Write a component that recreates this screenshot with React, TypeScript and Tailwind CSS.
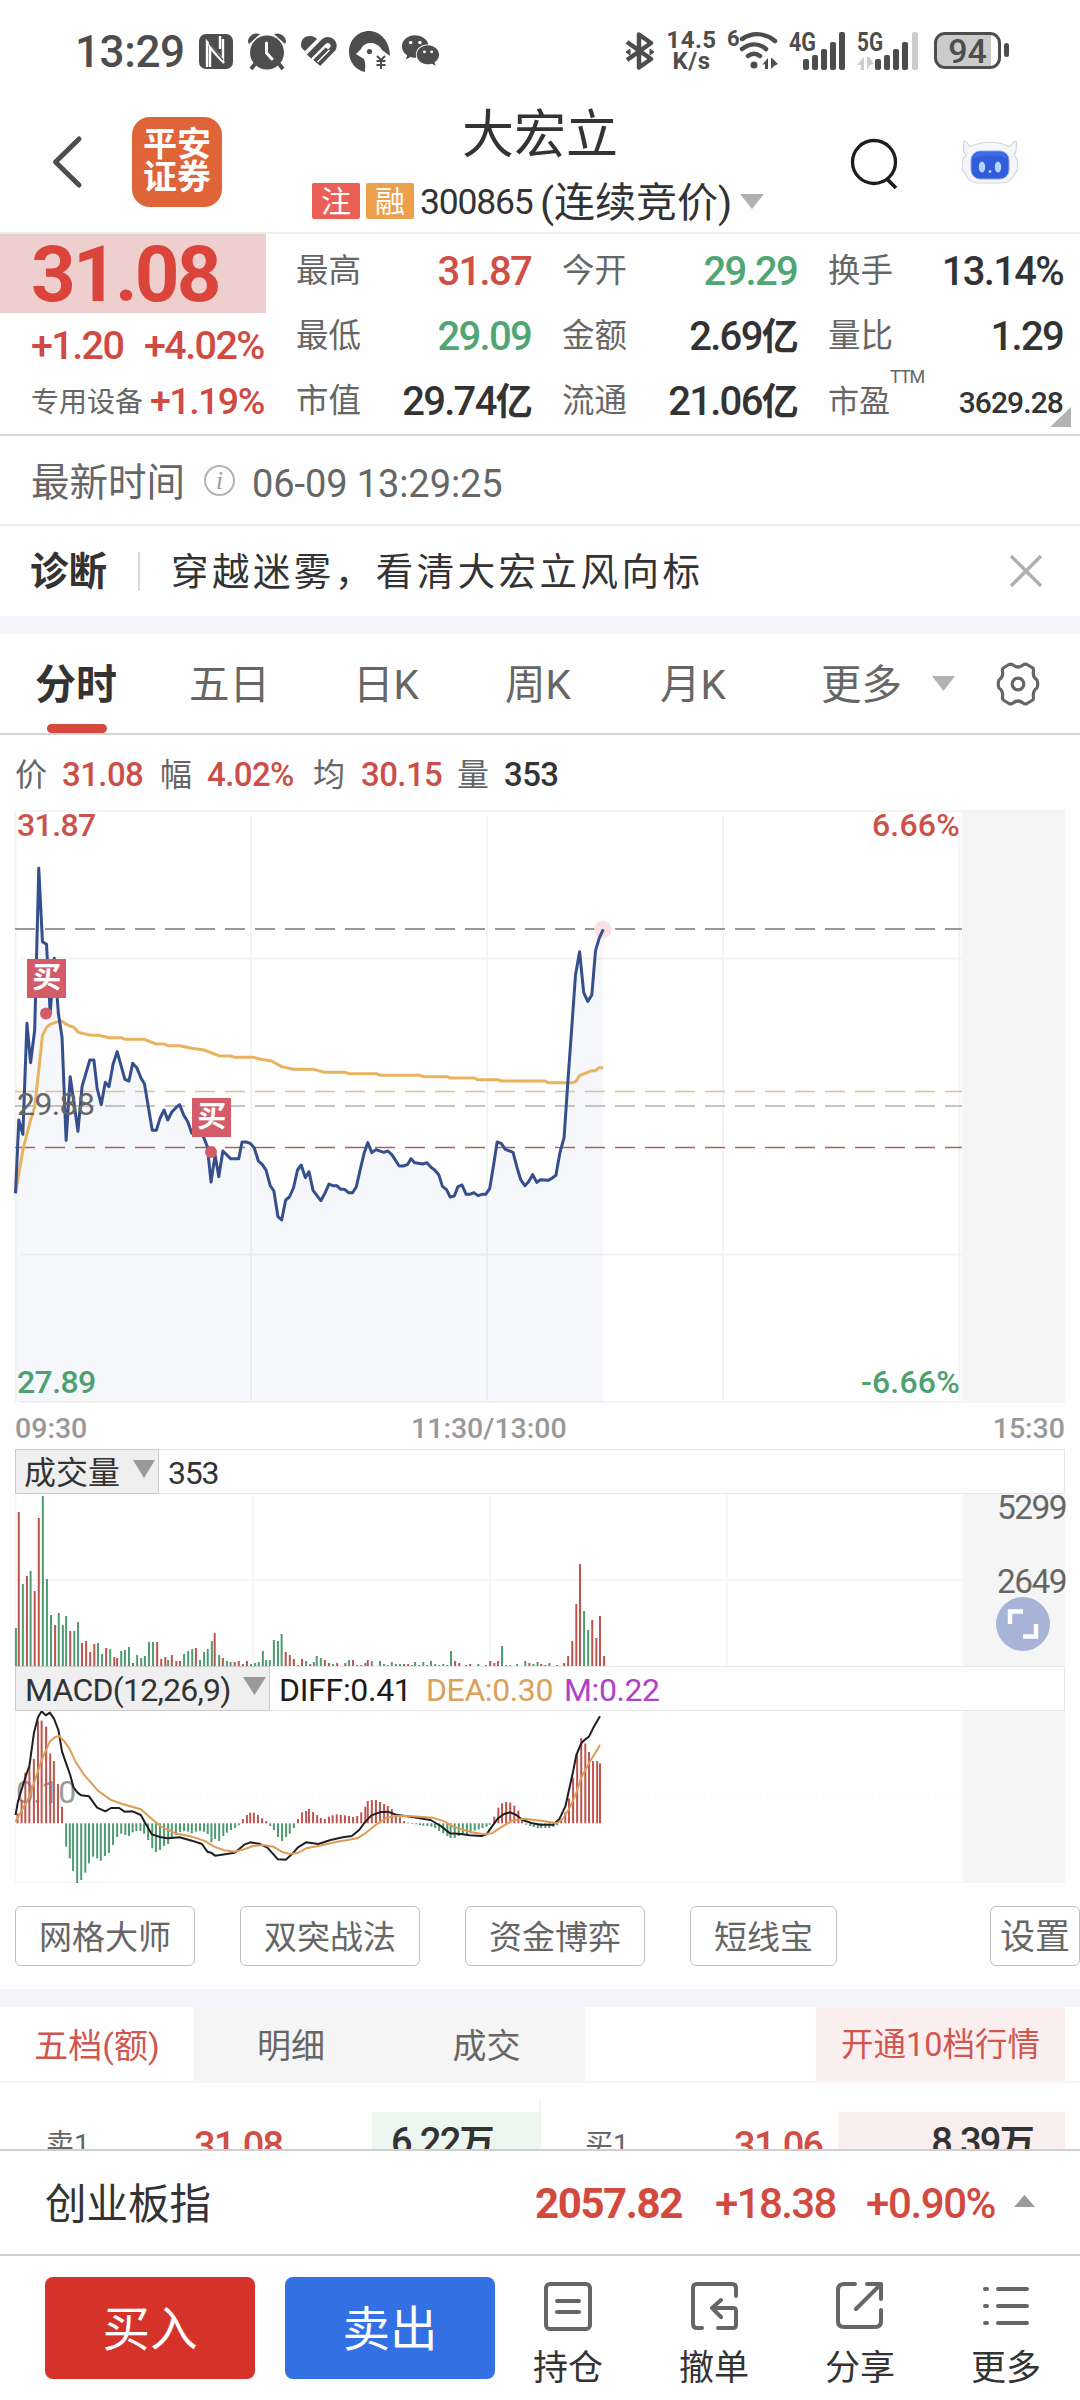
import React from "react";
import { FaWeixin } from "react-icons/fa";

const PRICE =
  "38,1180 46,960 56,1003 66,670 75,788 85,690 95,205 104,425 114,433 123,640 133,475 143,640 152,712 162,1021 172,830 181,905 191,994 201,860 220,780 230,780 238,865 248,914 258,847 267,860 277,793 287,755 306,838 316,843 325,790 335,803 345,833 354,852 373,991 383,991 392,955 402,930 411,960 421,936 431,923 440,914 450,945 460,965 470,1000 480,985 490,990 500,1015 508,1040 517,1146 527,1065 536,1130 546,1053 565,1076 585,1076 593,1026 603,1026 613,1030 623,1044 633,1083 643,1094 652,1111 662,1157 671,1173 681,1250 690,1260 700,1200 709,1191 719,1164 729,1110 738,1095 748,1133 757,1115 767,1171 786,1202 796,1180 806,1152 815,1157 825,1157 835,1168 844,1168 854,1178 864,1178 873,1160 882,1112 892,1060 901,1028 911,1058 921,1049 940,1057 950,1053 960,1064 978,1098 988,1098 998,1094 1007,1076 1016,1088 1036,1092 1046,1088 1056,1102 1065,1110 1075,1124 1084,1159 1094,1169 1103,1191 1113,1188 1122,1160 1132,1155 1142,1183 1151,1183 1161,1178 1171,1187 1181,1183 1190,1183 1200,1165 1210,1090 1218,1026 1228,1030 1238,1048 1257,1057 1267,1104 1276,1140 1286,1157 1295,1145 1305,1124 1315,1147 1324,1139 1344,1141 1353,1134 1362,1126 1372,1057 1382,1013 1391,850 1401,680 1410,525 1420,455 1430,577 1440,604 1450,585 1459,452 1468,415 1478,388";

const AVERAGE =
  "38,1180 56,1050 75,960 85,922 95,810 104,707 114,682 123,673 143,664 152,664 162,673 181,682 191,696 201,700 220,705 240,706 268,713 297,713 307,718 354,718 382,732 402,732 412,737 440,737 470,745 500,750 536,767 565,768 575,772 622,772 635,777 665,783 690,800 718,808 768,808 796,817 845,817 855,821 922,821 932,826 1030,826 1038,830 1095,830 1103,834 1162,834 1170,839 1220,839 1228,843 1335,843 1343,848 1403,848 1411,844 1420,827 1450,812 1459,812 1468,803 1478,803";

// "x:top" pairs; a trailing g marks a falling minute, r a rising one.
const VOLUME =
  "39:774g 46:426r 56:642g 66:618r 75:603g 85:663r 95:444r 105:378g 115:627g 125:735g 135:765r 144:729g 154:765g 162:738g 172:783r 182:783g 191:756g 201:819r 211:813r 221:846r 231:822r 240:819g 250:852g 260:834r 270:837g 280:861r 287:864r 297:843g 306:840g 316:831g 326:879r 336:855g 346:864g 355:858g 365:816g 375:816g 385:816r 395:867r 405:861r 412:870g 421:855r 432:873r 441:873r 451:852g 461:843g 471:837g 480:834r 490:870g 500:846g 509:837g 519:813g 526:789r 537:855g 546:864r 556:873g 565:876g 575:876r 585:873r 595:882r 605:873r 615:882g 625:879g 634:876g 644:843g 652:870g 661:870g 671:810g 681:813g 690:792g 700:846r 710:855r 720:867r 730:885r 740:867r 750:873g 760:882r 769:876g 776:858g 786:864g 796:870r 806:879r 816:882g 826:879r 846:879r 855:870g 865:870r 875:885r 885:885r 895:879r 901:870r 911:873g 931:873g 941:882g 950:885r 960:876g 970:882g 980:882g 990:882r 1000:882r 1010:885r 1017:876g 1027:885g 1037:876g 1047:885r 1056:873g 1066:882g 1076:885g 1086:882g 1096:885g 1105:843g 1115:873r 1125:879r 1142:885g 1152:882r 1172:882g 1191:885r 1201:873r 1211:879r 1220:873r 1230:828g 1240:885g 1250:885g 1267:882g 1287:873g 1297:879r 1307:882g 1317:876g 1326:882r 1336:885r 1346:879g 1365:885r 1382:879r 1392:858r 1402:813r 1412:702r 1421:582r 1431:723g 1441:780g 1451:750r 1461:804r 1470:738r 1480:858r";

const MACD =
  "43:400 53:360 62:278 72:258 83:237 93:122 102:122 113:140 123:220 132:243 142:312 152:380 162:500 171:535 179:573 189:612 199:600 209:578 218:550 228:530 238:535 247:542 257:528 267:519 277:495 287:471 297:461 307:465 316:468 325:457 334:453 344:453 353:461 363:480 373:505 382:516 392:510 402:498 412:492 421:477 431:465 441:456 451:453 461:455 470:460 480:455 490:453 500:455 509:462 518:487 527:477 537:483 547:468 556:458 566:450 576:444 585:436 595:417 605:405 613:398 622:398 632:405 642:415 652:423 662:438 671:450 681:471 691:483 701:471 710:461 720:444 730:417 740:397 750:393 757:387 767:396 777:405 786:414 796:417 806:410 815:406 825:403 835:405 845:406 855:408 865:411 875:408 885:397 895:380 901:363 911:360 921:360 931:366 941:372 950:378 960:387 970:405 980:412 990:423 1000:428 1010:432 1020:433 1029:435 1037:437 1047:438 1057:440 1066:444 1076:453 1086:460 1096:468 1104:474 1114:474 1124:468 1134:465 1144:463 1153:460 1163:452 1173:448 1182:444 1192:440 1200:434 1211:410 1221:383 1230:370 1240:366 1250:368 1260:377 1270:392 1279:417 1289:434 1299:438 1308:441 1318:444 1326:444 1336:444 1346:444 1356:441 1365:436 1375:420 1385:397 1394:355 1404:293 1414:225 1424:174 1434:190 1443:216 1453:243 1463:243 1470:250";

const DIFF =
  "38,405 44,365 54,325 64,285 72,258 83,160 93,112 102,94 112,106 122,98 132,115 143,150 152,215 162,250 172,285 180,322 190,338 199,346 218,349 238,383 258,394 272,384 292,384 305,395 325,394 345,405 356,430 372,463 392,471 410,475 440,472 470,482 495,492 508,515 517,518 527,527 575,518 600,493 613,487 635,491 655,503 670,523 681,538 700,539 715,523 730,502 750,487 780,492 810,480 840,472 862,468 880,450 895,425 910,406 930,397 950,395 970,404 1010,411 1055,420 1080,438 1102,460 1130,462 1150,466 1180,468 1192,463 1205,440 1220,415 1235,402 1250,397 1265,405 1280,420 1305,430 1325,434 1355,434 1370,418 1385,380 1395,325 1404,275 1412,225 1424,190 1434,178 1443,170 1455,140 1470,109";

const DEA =
  "38,425 54,390 72,350 90,285 102,240 122,185 135,171 145,168 158,185 170,205 185,245 205,283 240,332 270,359 300,372 345,388 370,415 395,440 430,460 470,470 500,482 525,500 550,511 575,515 600,507 620,498 645,495 670,500 690,515 710,522 730,519 750,505 780,498 820,487 875,475 895,460 920,435 945,415 970,408 1000,408 1060,413 1090,425 1110,440 1150,455 1185,463 1205,460 1230,440 1255,422 1285,416 1330,423 1365,430 1380,415 1395,385 1410,345 1425,290 1445,245 1458,220 1470,195";

const SX = 1 / 2.45;

function bars(source: string) {
  return source.split(" ").map((item) => {
    const [x, rest] = item.split(":");
    return { x: Number(x) * SX, y: parseInt(rest, 10) / 3, up: !rest.endsWith("g") };
  });
}

function Triangle({ className, up = false }: { className: string; up?: boolean }) {
  return (
    <svg className={className} viewBox="0 0 24 16" preserveAspectRatio="none" fill="currentColor">
      <path d={up ? "M12 0 24 16H0z" : "M0 0h24L12 16z"} />
    </svg>
  );
}

function StatusBar() {
  return (
    <div className="flex h-[100px] pt-[30px] pl-[75px] text-[#4d4d4d]">
      <span className="w-[124px] pt-[2px] text-[44px] leading-[40px] font-medium tracking-[-0.400px] whitespace-nowrap">13:29</span>
      <svg className="mt-[4px] h-[35px] w-[34px]" viewBox="0 0 34 35">
        <rect width="34" height="35" rx="7" fill="#4d4d4d" />
        <path d="M8 33V8l16 18V5M11 33V14l14 15M21 2v13" fill="none" stroke="#fff" strokeWidth="2.4" />
        <path d="M10 9l14 17" stroke="#4d4d4d" strokeWidth="1.5" />
      </svg>
      <svg className="mt-[3px] ml-[15px] h-[37px] w-[38px]" viewBox="0 0 38 37" fill="#4d4d4d">
        <path d="M0 9C0 3 6-1 12 1L1 11zM38 9C38 3 32-1 26 1l11 10z" />
        <circle cx="19" cy="19.500" r="17" />
        <path d="M7 31l-4 5M31 31l4 5" stroke="#4d4d4d" strokeWidth="4" />
        <path d="M18.500 10v10l5.500 6" fill="none" stroke="#fff" strokeWidth="3" strokeLinecap="round" />
      </svg>
      <svg className="mt-[6px] ml-[15px] h-[31px] w-[36px]" viewBox="0 0 36 31" fill="none" stroke="#4d4d4d" strokeWidth="6">
        <path d="M0 9C0 3 4 0 9 0c3 0 5 1 7 3L4 15C1 13 0 11 0 9z" fill="#4d4d4d" stroke="none" />
        <path d="M8 20.500 23 5.500c4.500-4 12 1 9 7L17 28" />
        <path d="M14 25.500 26.500 13" strokeWidth="5" />
        <path d="M12 22.800 25 9.800M16.500 26l12-12" stroke="#fff" strokeWidth="1.400" />
      </svg>
      <svg className="mt-px ml-[12px] h-[41px] w-[41px]" viewBox="0 0 41 41">
        <path d="M16 41C6 39 0 30 0 21 0 9 9 0 20 0s21 10 21 25l-8-6c-5-9-17-9-21-1l-5 5 8 5c2 5 1 8 1 13z" fill="#4d4d4d" />
        <circle cx="20.500" cy="20.500" r="2.600" fill="#4d4d4d" />
        <path d="M28 25l4 4 4-4M27.500 30h9M27.500 34h9M32 29v9" stroke="#4d4d4d" strokeWidth="2" fill="none" />
      </svg>
      <FaWeixin className="mt-[1px] ml-[11px] size-[39px]" />

      <svg className="mt-[2px] ml-[185px] h-[38px] w-[30px]" viewBox="0 0 30 38" fill="none" stroke="#4d4d4d" strokeWidth="4.500">
        <path d="M2 10l24 17-12 8.500v-33L26 11 2 28" strokeLinejoin="round" />
        <path d="M1 20l4-3v6zM29 20l-4-3v6z" fill="#4d4d4d" strokeWidth="1" />
      </svg>
      <div className="ml-[11px] w-[51px] text-center text-[24px] leading-[21px] font-bold tracking-[0.500px]">
        <div>14.5</div>
        <div>K/s</div>
      </div>
      <div className="ml-[10px] w-[12px] text-[22px] leading-[18px] font-bold">6</div>
      <svg className="mt-[2px] h-[38px] w-[40px]" viewBox="0 0 40 38" fill="none" stroke="#4d4d4d" strokeWidth="4.500" strokeLinecap="round">
        <path d="M3 7c11-7 23-6 33 2M3 17c8-6 17-6 24 0M9 24c4-3 8-3 12 0" />
        <circle cx="15" cy="33" r="3.500" fill="#4d4d4d" stroke="none" />
        <path d="M29 26v11h-3v-5l-3 1zM32 37V26h1l6 6-4 2z" fill="#4d4d4d" stroke="none" />
      </svg>
      <svg className="mt-[1px] ml-[10px] h-[40px] w-[59px] overflow-visible" viewBox="0 0 59 40" fill="#4d4d4d">
        <text x="0" y="19.500" fontSize="25" fontWeight="700" textLength="27" lengthAdjust="spacingAndGlyphs">4G</text>
        <rect x="14" y="28" width="6" height="11" rx="2" />
        <rect x="23" y="24" width="6" height="15" rx="2" />
        <rect x="32" y="18" width="6" height="21" rx="2" />
        <rect x="41" y="11" width="6" height="28" rx="2" />
        <rect x="50" y="1" width="6" height="38" rx="2" />
      </svg>
      <svg className="mt-[1px] ml-[9px] h-[40px] w-[63px] overflow-visible" viewBox="0 0 63 40" fill="#4d4d4d">
        <text x="0" y="19.500" fontSize="25" fontWeight="700" textLength="26" lengthAdjust="spacingAndGlyphs">5G</text>
        <path d="M7 26v13l-3 0v-5l-4 0zM10 39V26h2l5 7-4 1z" fill="#ccc" />
        <rect x="18" y="28" width="6" height="11" rx="2" />
        <rect x="27" y="24" width="6" height="15" rx="2" />
        <rect x="36" y="18" width="6" height="21" rx="2" />
        <rect x="45" y="11" width="6" height="28" rx="2" />
        <rect x="55" y="1" width="6" height="38" rx="2" fill="#ccc" />
      </svg>
      <div className="mt-[2px] ml-[14px] flex h-[37px] w-[67px] items-center justify-center rounded-[11px] border-[3px] border-[#4d4d4d] bg-[linear-gradient(90deg,#cbcbcb_88%,#fff_88%)] text-[34px] leading-none font-medium">
        94
      </div>
      <div className="mt-[13px] ml-[3px] h-[14px] w-[5px] rounded-full bg-[#4d4d4d]" />
    </div>
  );
}

function Header() {
  return (
    <header className="flex h-[134px] border-b-2 border-[#ededed] pl-[50px] text-[#333]">
      <svg className="mt-[34px] h-[56px] w-[34px]" viewBox="0 0 34 56" fill="none" stroke="#4d4d4d" strokeWidth="5" strokeLinecap="round" strokeLinejoin="round">
        <path d="M29 5 5.500 28 29 51" />
      </svg>
      <div className="mt-[17px] ml-[48px] flex size-[90px] flex-col items-center justify-center rounded-[18px] bg-[#df6438] text-[34px] leading-none font-bold text-white">
        <span className="h-[33px] leading-[31px]">平安</span>
        <span className="h-[33px] leading-[31px]">证券</span>
      </div>
      <div className="ml-[90px] w-[456px]">
        <div className="mt-[6px] h-[60px] text-center text-[52px] leading-[60px]">大宏立</div>
        <div className="mt-[14px] flex h-[42px] items-center whitespace-nowrap">
          <span className="flex h-[36px] w-[48px] items-center justify-center rounded-[2px] bg-[#ea6056] pt-[1px] text-[30px] leading-none text-white">注</span>
          <span className="ml-[6px] flex h-[36px] w-[48px] items-center justify-center rounded-[2px] bg-[#eda04b] pt-[1px] text-[30px] leading-none text-white">融</span>
          <span className="ml-[6px] w-[120px] pt-[3px] text-[35.500px] leading-none tracking-[-1.200px]">300865</span>
          <span className="w-[200px] pt-[5px] text-[41px] leading-none">(连续竞价)</span>
          <Triangle className="h-[15px] w-[24px] text-[#b0b0b0]" />
        </div>
      </div>
      <svg className="mt-[38px] ml-[82px] h-[52px] w-[48px]" viewBox="0 0 48 52" fill="none" stroke="#1c1c1c" strokeWidth="3.300">
        <circle cx="24" cy="24" r="21.500" />
        <path d="M37 41l9 9" strokeWidth="3.800" />
      </svg>
      <svg className="mt-[40px] ml-[64px] h-[44px] w-[56px]" viewBox="0 0 56 44">
        <path d="M2 1c4 0 4 7 8 5 10-5 26-5 36 0 4 2 4-5 8-5 1 5 1 10-2 15 5 2 5 15 1 17-2 6-7 10-13 10H16C10 43 5 39 3 33c-4-2-4-15 1-17C1 11 1 6 2 1z" fill="#f4f6f9" stroke="#d3d6dd" strokeWidth="1.200" />
        <rect x="9" y="11" width="38" height="28" rx="9" fill="#2f5ddb" stroke="#8ea7e6" strokeWidth="1" />
        <path d="M11 18c0-4 3-6 7-6h20c5 0 7 3 7 7-9-5-22-4-34-1z" fill="#3c6ce6" />
        <ellipse cx="20" cy="27" rx="3.200" ry="5.500" fill="#b5d2ff" />
        <ellipse cx="36" cy="27" rx="3.200" ry="5.500" fill="#b5d2ff" />
        <circle cx="28" cy="31.500" r="1.300" fill="#dce9ff" />
      </svg>
    </header>
  );
}

function Stat({ label, value, color = "text-[#333]", unit }: { label: string; value: string; color?: string; unit?: string }) {
  return (
    <div className="flex h-[65px] items-center justify-between whitespace-nowrap">
      <span className="text-[32.500px] leading-none text-[#666]">{label}</span>
      <span className={"text-[40px] leading-none font-medium tracking-[-1.700px] " + color}>
        {value}
        {unit && <span className="text-[37px] leading-none font-bold">{unit}</span>}
      </span>
    </div>
  );
}

function Quote() {
  return (
    <section className="relative flex h-[202px] border-b-2 border-[#d3d3d3]">
      <div className="w-[266px] whitespace-nowrap">
        <div className="flex h-[79px] items-center bg-[#eecfce] pt-[3px] pl-[31px] text-[78px] leading-none font-bold tracking-[-2.800px] text-[#db443a]">31.08</div>
        <div className="mt-[2px] flex h-[62px] items-center pl-[31px] text-[39.500px] leading-none font-medium tracking-[-1.600px] text-[#d14a42]">
          <span className="w-[113px]">+1.20</span>
          <span>+4.02%</span>
        </div>
        <div className="flex h-[50px] items-center pl-[31px] leading-none">
          <span className="w-[119px] pt-[1px] text-[28px] text-[#666]">专用设备</span>
          <span className="text-[37.500px] font-medium tracking-[-1.500px] text-[#d14a42]">+1.19%</span>
        </div>
      </div>
      <div className="ml-[30px] grid w-[768px] grid-cols-[235px_235px_235px] gap-x-[31px] pt-[5px]">
        <Stat label="最高" value="31.87" color="text-[#cf4f47]" />
        <Stat label="今开" value="29.29" color="text-[#4fa672]" />
        <Stat label="换手" value="13.14%" />
        <Stat label="最低" value="29.09" color="text-[#4fa672]" />
        <Stat label="金额" value="2.69" unit="亿" />
        <Stat label="量比" value="1.29" />
        <Stat label="市值" value="29.74" unit="亿" />
        <Stat label="流通" value="21.06" unit="亿" />
        <div className="flex h-[65px] items-center whitespace-nowrap">
          <span className="w-[62px] text-[31px] leading-none text-[#666]">市盈</span>
          <span className="mb-[50px] text-[18px] leading-none tracking-[-1px] text-[#666]">TTM</span>
          <span className="ml-auto pt-[2px] text-[30px] leading-none font-medium tracking-[-0.900px] text-[#333]">3629.28</span>
        </div>
      </div>
      <svg className="absolute right-[9px] bottom-[7px] h-[20px] w-[21px]" viewBox="0 0 21 20">
        <path d="M21 0v20H0z" fill="#b3b3b3" />
      </svg>
    </section>
  );
}

function Notices() {
  return (
    <>
      <div className="flex h-[90px] items-center border-b-2 border-[#ebebeb] pt-[6px] pl-[31px] leading-none whitespace-nowrap text-[#666]">
        <span className="w-[173px] text-[38.500px]">最新时间</span>
        <span className="mb-[6px] flex size-[31px] items-center justify-center rounded-full border-2 border-[#b3b3b3] font-['Liberation_Serif',serif] text-[25px] text-[#999] italic">i</span>
        <span className="ml-[17px] pt-[2px] text-[38px] tracking-[-0.100px]">06-09 13:29:25</span>
      </div>
      <div className="flex h-[90px] items-center pl-[30px] leading-none whitespace-nowrap text-[#333]">
        <span className="w-[108px] pt-[3px] text-[38.500px] font-bold">诊断</span>
        <span className="h-[39px] w-[2px] bg-[#d9d9d9]" />
        <span className="ml-[31px] w-[839px] pt-[4px] text-[37.500px] tracking-[3.450px]">穿越迷雾，看清大宏立风向标</span>
        <svg className="size-[32px]" viewBox="0 0 32 32" stroke="#b0b0b0" strokeWidth="3.500">
          <path d="M1 1l30 30M31 1 1 31" />
        </svg>
      </div>
      <div className="h-[18px] bg-[#f3f5f9]" />
    </>
  );
}

function Tabs() {
  return (
    <nav className="relative flex h-[101px] items-center border-b-2 border-[#d3d5d5] pl-[35px] text-[40.500px] leading-none whitespace-nowrap text-[#666]">
      <span className="w-[154px] pt-[3px] text-[41px] font-bold text-[#333]">分时</span>
      <span className="w-[164px] pt-[4px]">五日</span>
      <span className="w-[152px] pt-[4px]">日K</span>
      <span className="w-[155px] pt-[4px]">周K</span>
      <span className="w-[161px] pt-[4px]">月K</span>
      <span className="w-[111px] pt-[4px]">更多</span>
      <Triangle className="h-[15px] w-[23px] text-[#b3b3b3]" />
      <svg className="ml-[41px] size-[44px]" viewBox="0 0 44 44" fill="none" stroke="#666" strokeWidth="3.200" strokeLinejoin="round">
        <path d="M13 2.500q2-1 4 .5 5 4 10 0 2-1.500 4-.5l5 3q2 1 1.500 3.500-1 6 3.500 9 1.500 4 0 8-4.500 3-3.500 9 .5 2.500-1.500 3.500l-5 3q-2 1-4-.5-5-4-10 0-2 1.500-4 .5l-5-3q-2-1-1.500-3.500 1-6-3.500-9-1.500-4 0-8 4.500-3 3.500-9Q6 6.500 8 5.500z" />
        <circle cx="22" cy="22" r="5.800" />
      </svg>
      <span className="absolute bottom-0 left-[47px] h-[9px] w-[60px] rounded-[5px] bg-[#d6493f]" />
    </nav>
  );
}

function Figures() {
  return (
    <div className="flex h-[75px] items-center pt-[4px] pl-[15px] text-[33px] leading-none font-medium tracking-[-0.600px] whitespace-nowrap text-[#cb4f48]">
      <span className="w-[47px] text-[32px] font-normal text-[#666]">价</span>
      <span className="w-[98px]">31.08</span>
      <span className="w-[47px] text-[32px] font-normal text-[#666]">幅</span>
      <span className="w-[106px]">4.02%</span>
      <span className="w-[48px] text-[32px] font-normal text-[#666]">均</span>
      <span className="w-[96px]">30.15</span>
      <span className="w-[47px] text-[32px] font-normal text-[#666]">量</span>
      <span className="text-[#333]">353</span>
    </div>
  );
}

function BuyMark({ className }: { className: string }) {
  return (
    <span className={"absolute flex h-[39px] w-[39px] items-center justify-center bg-[#d45b68] pb-[1px] text-[29px] leading-none font-bold text-white " + className}>买</span>
  );
}

function PriceChart() {
  return (
    <div className="relative h-[593px] text-[32px] leading-none font-medium tracking-[-0.600px]">
      <svg className="block h-[593px] w-[1080px]" viewBox="0 0 1080 593" fill="none">
        <rect x="962" width="103" height="593" fill="#f5f5f5" />
        <path d="M15.500 0v593M251 6v587M487 6v587M723 6v587M959.500 6v587M20 1h942M20 148.500h942M20 444.500h942M20 592h942" stroke="#f3f3f4" strokeWidth="2" />
        <g transform="translate(0 -10) scale(.40816 .33333)">
          <path d={"M38 1806L" + PRICE + " 1478 1806z"} fill="#4a70c8" fillOpacity=".05" />
        </g>
        <path d="M15 119h947" stroke="#999" strokeWidth="2" strokeDasharray="20 10" />
        <path d="M15 281.500h947" stroke="#dcc38f" strokeWidth="1.400" strokeDasharray="20 10" />
        <path d="M15 296h947" stroke="#c4c4c4" strokeWidth="2" strokeDasharray="20 10" />
        <path d="M15 337.500h947" stroke="#b0615b" strokeWidth="1.300" strokeDasharray="20 10" />
        <circle cx="603" cy="119.500" r="8.700" fill="#f8e0e2" />
        <g transform="translate(0 -10) scale(.40816 .33333)" strokeLinejoin="round">
          <polyline points={AVERAGE} stroke="#e9b25f" strokeWidth="3" vectorEffect="non-scaling-stroke" />
          <polyline points={PRICE} stroke="#344f8c" strokeWidth="3" vectorEffect="non-scaling-stroke" />
        </g>
        <circle cx="46" cy="203.500" r="6" fill="#d45b68" />
        <circle cx="211" cy="342" r="6" fill="#d45b68" />
      </svg>
      <span className="absolute top-[-1px] left-[17px] text-[#cb524b]">31.87</span>
      <span className="absolute top-[-1px] right-[120px] tracking-[0.200px] text-[#cb524b]">6.66%</span>
      <span className="absolute top-[278px] left-[17px] font-normal text-[#666]">29.88</span>
      <span className="absolute top-[556px] left-[17px] text-[#4fa071]">27.89</span>
      <span className="absolute top-[556px] right-[120px] tracking-[0.200px] text-[#4fa071]">-6.66%</span>
      <BuyMark className="top-[149px] left-[27px]" />
      <BuyMark className="top-[288px] left-[192px]" />
    </div>
  );
}

function VolumePanel() {
  return (
    <>
      <div className="mx-[15px] flex h-[45px] items-center border border-[#e6e6e6] leading-none text-[#333]">
        <div className="-ml-px flex h-[45px] w-[144px] items-center border border-[#cbcbcb] bg-[#efefef] pl-[8px]">
          <span className="w-[109px] pt-[3px] text-[32px]">成交量</span>
          <Triangle className="mb-[5px] h-[18px] w-[22px] text-[#999]" />
        </div>
        <span className="ml-[9px] pt-[3px] text-[32px] tracking-[-1.200px]">353</span>
      </div>
      <div className="relative h-[172px] text-[33.500px] leading-none tracking-[-1.600px] text-[#666]">
        <svg className="block h-[172px] w-[1080px]" viewBox="0 0 1080 172">
          <rect x="963" width="102" height="172" fill="#f5f5f5" />
          <path d="M15.500 0v172M253 0v172M490 0v172M727 0v172M15 86h948" stroke="#f7f7f8" strokeWidth="2" />
          {bars(VOLUME).map((b) => (
            <rect key={b.x} x={b.x - 1} y={b.y - 124} width="2" height={296 - b.y} fill={b.up ? "#bd554f" : "#4f9c72"} />
          ))}
        </svg>
        <span className="absolute top-[-3px] right-[14px]">5299</span>
        <span className="absolute top-[71px] right-[14px]">2649</span>
        <svg className="absolute top-[103px] right-[30px] size-[54px]" viewBox="0 0 54 54" fill="none" stroke="#fff" strokeWidth="4.500">
          <circle cx="27" cy="27" r="27" fill="#a7b3d7" stroke="none" />
          <path d="M14 27V14.500h13M27 39.500h13V27" />
        </svg>
      </div>
    </>
  );
}

function MacdPanel() {
  return (
    <>
      <div className="mx-[15px] flex h-[45px] items-center border border-[#e6e6e6] text-[32px] leading-none whitespace-nowrap text-[#333]">
        <div className="-ml-px flex h-[45px] w-[255px] items-center border border-[#cbcbcb] bg-[#efefef] pl-[9px]">
          <span className="w-[218px] pt-[3px] tracking-[-0.750px]">MACD(12,26,9)</span>
          <Triangle className="mb-[5px] h-[18px] w-[23px] text-[#999]" />
        </div>
        <span className="ml-[9px] w-[147px] pt-[3px] tracking-[-0.300px] text-[#1c1c1c]">DIFF:0.41</span>
        <span className="w-[138px] pt-[3px] tracking-[-0.400px] text-[#dba05c]">DEA:0.30</span>
        <span className="pt-[3px] tracking-[-0.400px] text-[#ae42c6]">M:0.22</span>
      </div>
      <div className="relative h-[172px]">
        <span className="absolute top-[65px] left-[16px] text-[32px] leading-none tracking-[-0.700px] text-[#999]">0.10</span>
        <svg className="relative block h-[172px] w-[1080px]" viewBox="0 0 1080 172" fill="none">
          <rect x="963" width="102" height="172" fill="#f5f5f5" />
          <path d="M15.500 0v172M15 171.500h948" stroke="#f5f5f6" />
          <path d="M130 85.500h832" stroke="#f0f0f0" strokeDasharray="1 6" />
          {bars(MACD).map((b) => {
            const y = b.y - 31;
            return <rect key={b.x} x={b.x - 1} y={Math.min(y, 112.3)} width="2" height={Math.abs(112.3 - y)} fill={y < 112.3 ? "#bf554e" : "#4f9c72"} />;
          })}
          <g transform="translate(0 -31) scale(.40816 .33333)" strokeLinejoin="round">
            <polyline points={DIFF} stroke="#1f1f1f" strokeWidth="2" vectorEffect="non-scaling-stroke" />
            <polyline points={DEA} stroke="#de9b55" strokeWidth="2" vectorEffect="non-scaling-stroke" />
          </g>
        </svg>
      </div>
    </>
  );
}

const CHIP = "flex h-[60px] items-center justify-center rounded-[6px] border border-[#bfbfbf] pt-[3px] leading-none text-[#666] ";

function Strategies() {
  return (
    <div className="flex h-[106px] pt-[23px] pl-[15px] text-[33px] whitespace-nowrap">
      <span className={CHIP + "w-[180px]"}>网格大师</span>
      <span className={CHIP + "ml-[45px] w-[180px]"}>双突战法</span>
      <span className={CHIP + "ml-[45px] w-[180px]"}>资金博弈</span>
      <span className={CHIP + "ml-[45px] w-[147px]"}>短线宝</span>
      <span className={CHIP + "ml-[153px] w-[90px] text-[35px]"}>设置</span>
    </div>
  );
}

function OrderBook() {
  return (
    <section className="h-[142px] overflow-hidden leading-none whitespace-nowrap">
      <div className="flex h-[76px] border-b-2 border-[#f5f5f5] text-[34px] text-[#666]">
        <span className="flex w-[194px] items-center justify-center pt-[3px] text-[#d05650]">五档(额)</span>
        <span className="flex w-[196px] items-center justify-center bg-[#f5f5f5] pt-[3px] pr-[2px]">明细</span>
        <span className="flex w-[195px] items-center justify-center bg-[#f5f5f5] pt-[3px] pr-[2px]">成交</span>
        <span className="ml-[231px] flex w-[249px] items-center justify-center bg-[#fbeeee] pt-[3px] text-[32.500px] text-[#d05650]">开通10档行情</span>
      </div>
      <div className="flex h-[90px] text-[38px] font-medium tracking-[-1.700px] text-[#333]">
        <div className="mt-[17px] flex w-[541px] border-r-2 border-[#f3f3f3] pt-[12px]">
          <span className="mt-[19px] ml-[46px] w-[148px] text-[28px] font-normal tracking-normal text-[#666]">卖1</span>
          <span className="mt-[15px] w-[178px] text-[#cf4f47]">31.08</span>
          <span className="h-[70px] grow bg-[#ecf7ef] pt-[11px] pl-[19px]">
            6.22<span className="text-[35px] font-bold">万</span>
          </span>
        </div>
        <div className="mt-[17px] flex w-[524px] pt-[12px]">
          <span className="mt-[19px] ml-[44px] w-[149px] text-[28px] font-normal tracking-normal text-[#666]">买1</span>
          <span className="mt-[15px] w-[104px] text-[#cf4f47]">31.06</span>
          <span className="h-[70px] grow bg-[#fbeeee] pt-[11px] pr-[32px] text-right">
            8.39<span className="text-[35px] font-bold">万</span>
          </span>
        </div>
      </div>
    </section>
  );
}

function IndexBar() {
  return (
    <div className="flex h-[107px] items-center border-y-2 border-[#cfcfcf] pl-[45px] text-[42px] leading-none font-medium tracking-[-1.400px] whitespace-nowrap text-[#d2493f]">
      <span className="w-[490px] pt-[4px] text-[41.500px] font-normal tracking-normal text-[#333]">创业板指</span>
      <span className="w-[180px] pt-[3px] font-bold">2057.82</span>
      <span className="w-[151px] pt-[3px] tracking-[-1.600px]">+18.38</span>
      <span className="w-[148px] pt-[3px]">+0.90%</span>
      <Triangle up className="mb-[4px] h-[12px] w-[21px] text-[#999]" />
    </div>
  );
}

function Action({ label, children }: { label: string; children: React.ReactNode }) {
  return (
    <div className="flex w-[146px] flex-col items-center text-[#333]">
      <svg className="mt-[26px] h-[52px] w-[52px]" viewBox="0 0 52 52" fill="none" stroke="#666" strokeWidth="4" strokeLinecap="round" strokeLinejoin="round">
        {children}
      </svg>
      <span className="mt-[17px] text-[35px] leading-none">{label}</span>
    </div>
  );
}

function BottomBar() {
  return (
    <footer className="flex h-[144px] overflow-hidden">
      <div className="mt-[21px] ml-[45px] flex h-[102px] w-[210px] items-center justify-center rounded-[8px] bg-[#d53329] pt-[6px] text-[47.500px] leading-none text-white">买入</div>
      <div className="mt-[21px] ml-[30px] flex h-[102px] w-[210px] items-center justify-center rounded-[8px] bg-[#3370e3] pt-[6px] text-[47.500px] leading-none text-white">卖出</div>
      <div className="flex">
        <Action label="持仓">
          <rect x="4" y="2" width="44" height="45" rx="4" />
          <path d="M15 19h22M15 30h22" />
        </Action>
        <Action label="撤单">
          <path d="M14 46H9q-4 0-4-4V6q0-4 4-4h35q4 0 4 4v8M30 46h15q3 0 3-3V29q0-3-3-3H25M33 18l-9 8 9 9" />
        </Action>
        <Action label="分享">
          <path d="M21 2H10q-6 0-6 6v31q0 6 6 6h31q6 0 6-6V28M33 2h14v15M47 2 22 27" />
        </Action>
        <Action label="更多">
          <path d="M5 7h2M5 24h2M5 41h2M18 7h29M18 24h29M18 41h29" />
        </Action>
      </div>
    </footer>
  );
}

export default function App() {
  return (
    <main className="flex h-[2400px] w-[1080px] flex-col overflow-hidden bg-[#fefefe] font-['Roboto','Noto_Sans_CJK_SC',sans-serif] [&>*]:shrink-0">
      <StatusBar />
      <Header />
      <Quote />
      <Notices />
      <Tabs />
      <Figures />
      <PriceChart />
      <div className="mx-[15px] flex h-[46px] items-center pt-[6px] text-[28.500px] leading-none font-medium whitespace-nowrap text-[#999]">
        <span className="w-[396px]">09:30</span>
        <span>11:30/13:00</span>
        <span className="ml-auto">15:30</span>
      </div>
      <VolumePanel />
      <MacdPanel />
      <Strategies />
      <div className="h-[18px] bg-[#f3f5f9]" />
      <OrderBook />
      <IndexBar />
      <BottomBar />
    </main>
  );
}
